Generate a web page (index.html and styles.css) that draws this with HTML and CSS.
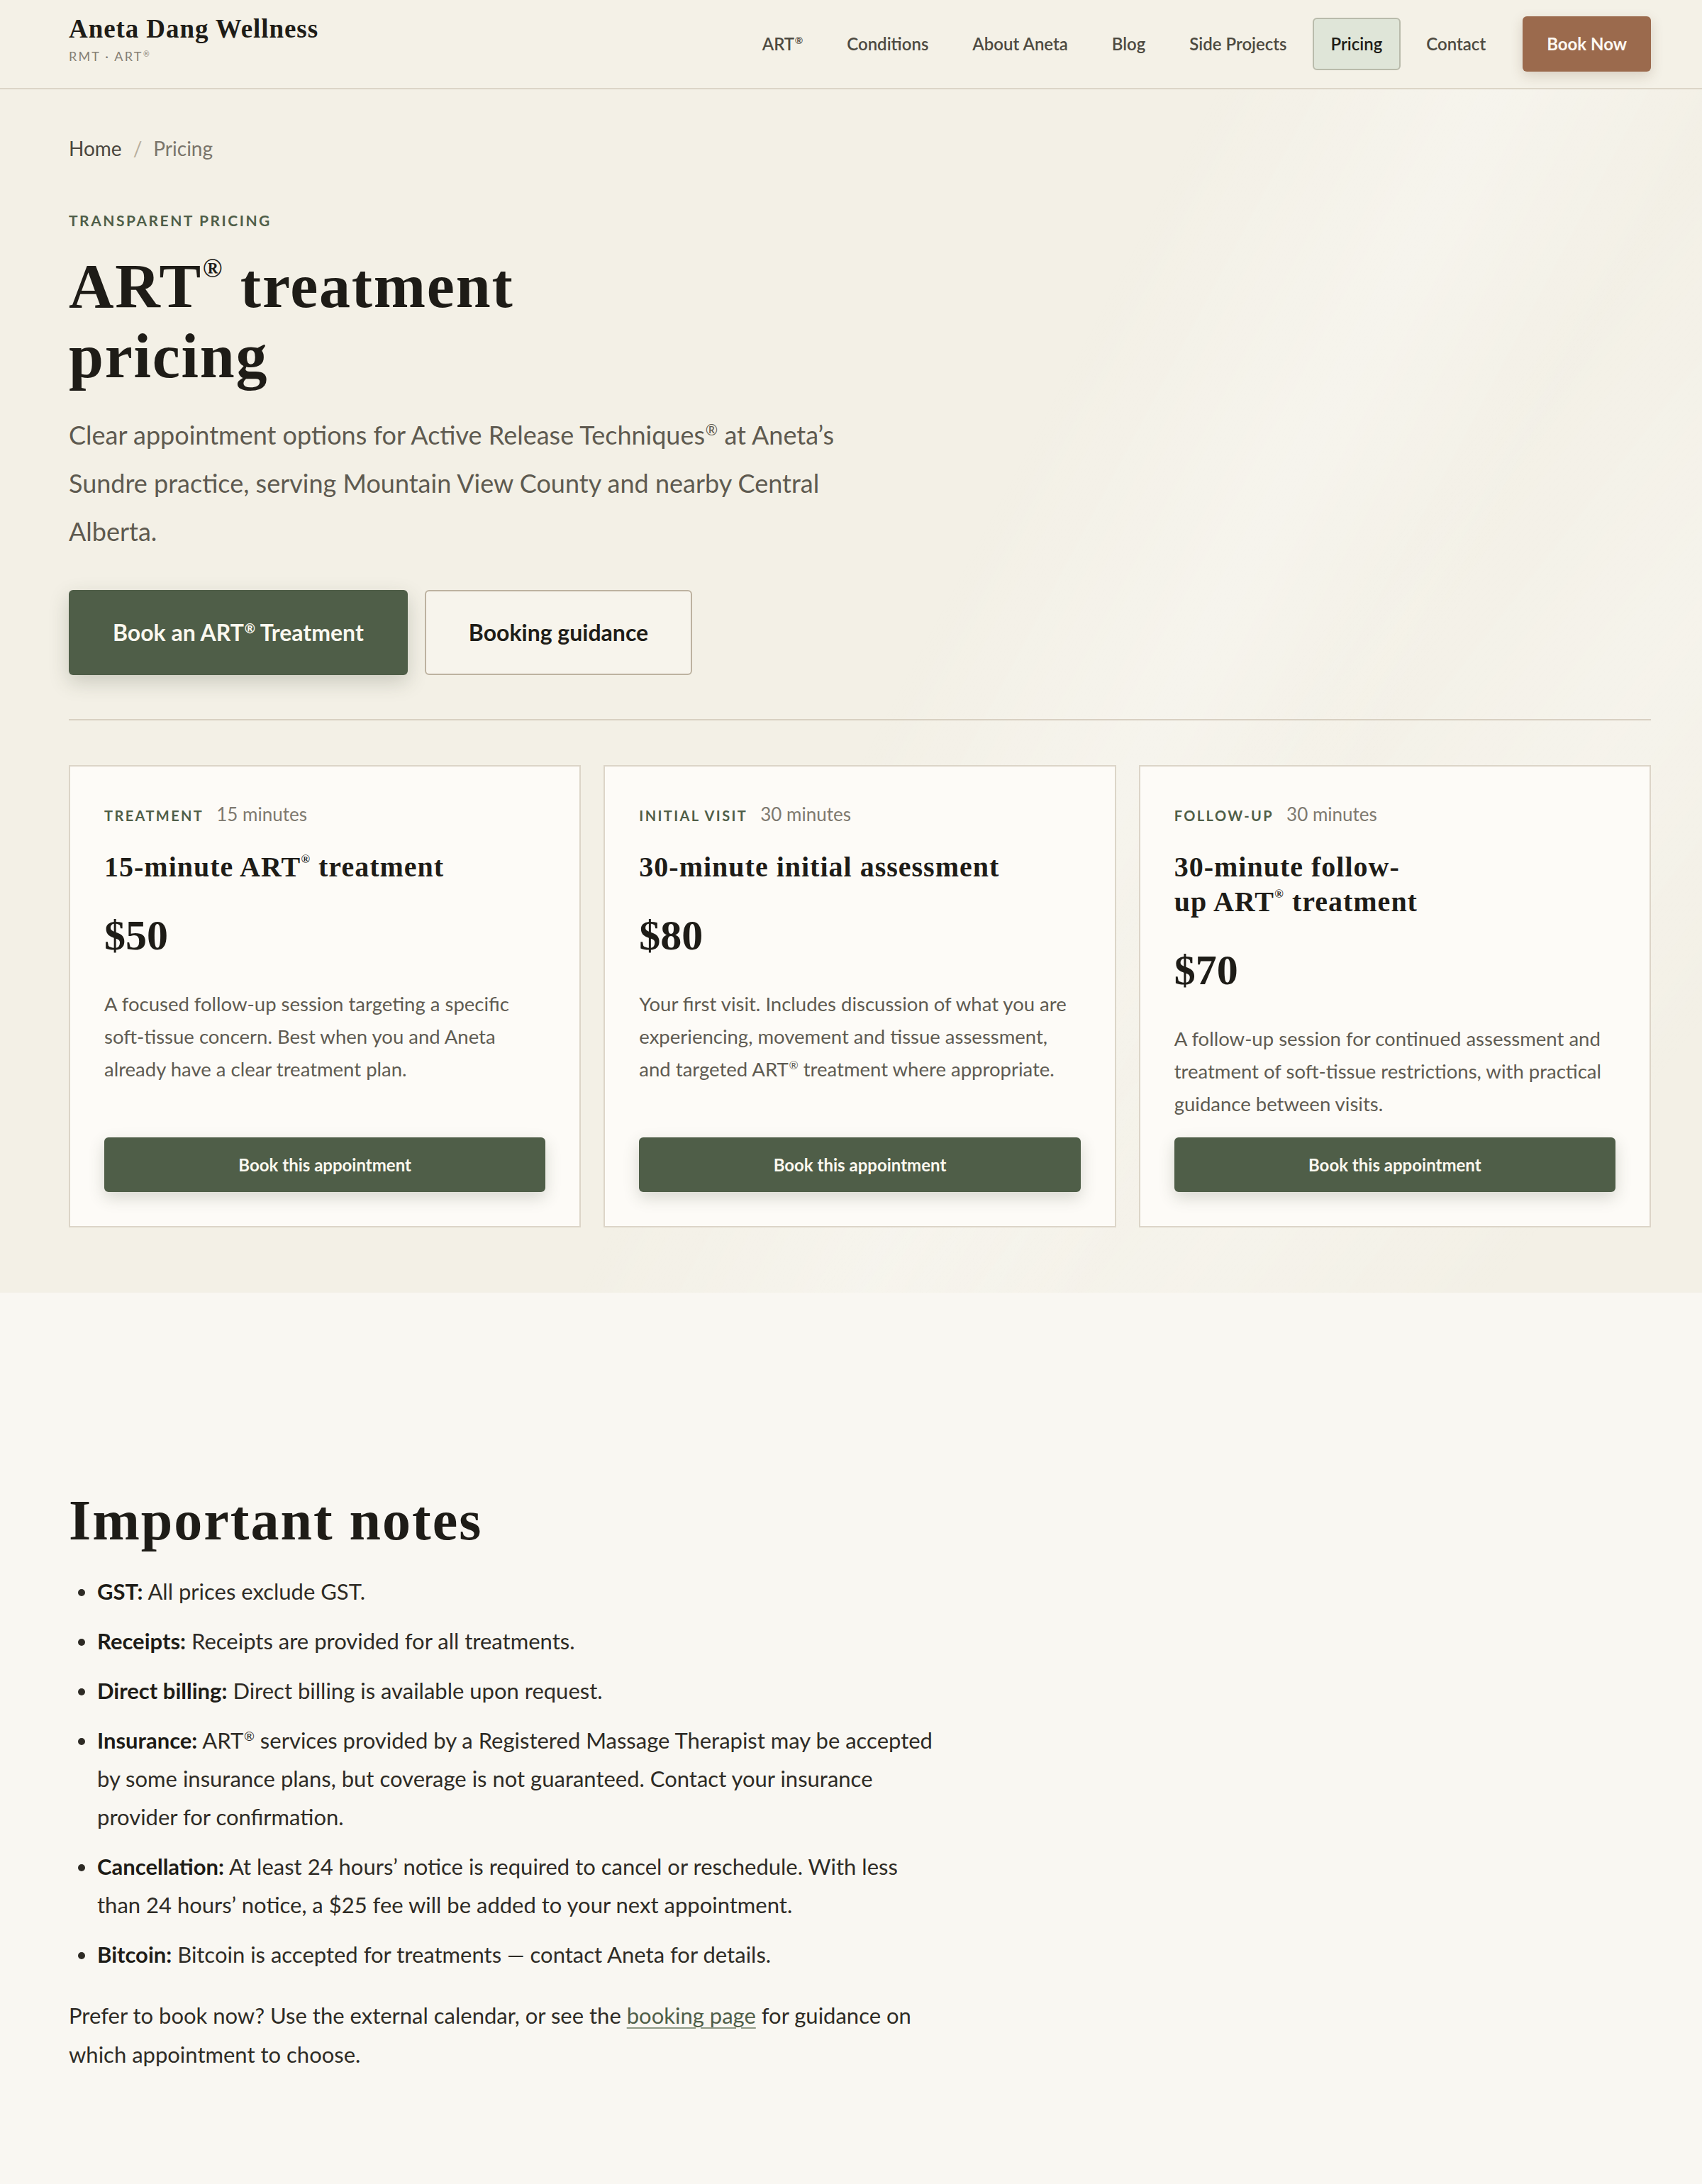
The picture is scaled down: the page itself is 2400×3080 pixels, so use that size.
FILE: index.html
```html
<!DOCTYPE html>
<html lang="en">
<head>
<meta charset="utf-8">
<title>ART® Treatment Pricing | Aneta Dang Wellness</title>
<link rel="stylesheet" href="styles.css">
</head>
<body>
<header class="site-header">
  <div class="container header-inner">
    <a class="brand" href="#">
      <span class="brand-name">Aneta Dang Wellness</span>
      <span class="brand-sub">RMT · ART<sup class="reg">®</sup></span>
    </a>
    <nav class="nav">
      <a class="nav-link" href="#">ART<sup class="reg">®</sup></a>
      <a class="nav-link" href="#">Conditions</a>
      <a class="nav-link" href="#">About Aneta</a>
      <a class="nav-link" href="#">Blog</a>
      <a class="nav-link" href="#">Side Projects</a>
      <a class="nav-link is-active" href="#">Pricing</a>
      <a class="nav-link" href="#">Contact</a>
      <a class="btn-book" href="#">Book Now</a>
    </nav>
  </div>
</header>

<main>
  <section class="hero">
    <div class="container">
      <nav class="breadcrumb">
        <a class="crumb" href="#">Home</a>
        <span class="crumb-sep">/</span>
        <span class="crumb-current">Pricing</span>
      </nav>
      <p class="eyebrow">Transparent pricing</p>
      <h1 class="hero-title">ART<sup class="reg">®</sup> treatment pricing</h1>
      <p class="lead">Clear appointment options for Active Release Techniques<sup class="reg">®</sup> at Aneta’s Sundre practice, serving Mountain View County and nearby Central Alberta.</p>
      <div class="hero-actions">
        <a class="btn btn-primary" href="#">Book an ART<sup class="reg">®</sup> Treatment</a>
        <a class="btn btn-outline" href="#">Booking guidance</a>
      </div>

      <div class="pricing-grid">
        <article class="card">
          <div class="card-meta"><span class="card-label">Treatment</span><span class="card-duration">15 minutes</span></div>
          <h2 class="card-title">15-minute ART<sup class="reg">®</sup> treatment</h2>
          <p class="card-price">$50</p>
          <p class="card-desc">A focused follow-up session targeting a specific soft-tissue concern. Best when you and Aneta already have a clear treatment plan.</p>
          <a class="card-btn" href="#">Book this appointment</a>
        </article>
        <article class="card">
          <div class="card-meta"><span class="card-label">Initial visit</span><span class="card-duration">30 minutes</span></div>
          <h2 class="card-title">30-minute initial assessment</h2>
          <p class="card-price">$80</p>
          <p class="card-desc">Your first visit. Includes discussion of what you are experiencing, movement and tissue assessment, and targeted ART<sup class="reg">®</sup> treatment where appropriate.</p>
          <a class="card-btn" href="#">Book this appointment</a>
        </article>
        <article class="card">
          <div class="card-meta"><span class="card-label">Follow-up</span><span class="card-duration">30 minutes</span></div>
          <h2 class="card-title">30-minute follow-up ART<sup class="reg">®</sup> treatment</h2>
          <p class="card-price">$70</p>
          <p class="card-desc">A follow-up session for continued assessment and treatment of soft-tissue restrictions, with practical guidance between visits.</p>
          <a class="card-btn" href="#">Book this appointment</a>
        </article>
      </div>
    </div>
  </section>

  <section class="notes">
    <div class="container">
      <div class="notes-body">
        <h2 class="notes-title">Important notes</h2>
        <ul class="notes-list">
          <li><strong>GST:</strong> All prices exclude GST.</li>
          <li><strong>Receipts:</strong> Receipts are provided for all treatments.</li>
          <li><strong>Direct billing:</strong> Direct billing is available upon request.</li>
          <li><strong>Insurance:</strong> ART<sup class="reg">®</sup> services provided by a Registered Massage Therapist may be accepted by some insurance plans, but coverage is not guaranteed. Contact your insurance provider for confirmation.</li>
          <li><strong>Cancellation:</strong> At least 24 hours’ notice is required to cancel or reschedule. With less than 24 hours’ notice, a $25 fee will be added to your next appointment.</li>
          <li><strong>Bitcoin:</strong> Bitcoin is accepted for treatments — contact Aneta for details.</li>
        </ul>
        <p class="notes-foot">Prefer to book now? Use the external calendar, or see the <a class="text-link" href="#">booking page</a> for guidance on which appointment to choose.</p>
      </div>
    </div>
  </section>
</main>
</body>
</html>
```

FILE: styles.css
```css
* { box-sizing: border-box; }

html, body { margin: 0; padding: 0; }

body {
  font-family: Lato, "Noto Sans", sans-serif;
  background: #f9f7f2;
  color: #2b2822;
}

a { color: inherit; text-decoration: none; }

.reg {
  font-size: 0.58em;
  line-height: 0;
  vertical-align: 0.62em;
  margin-left: 0.04em;
}

.hero-title .reg,
.card-title .reg {
  font-size: 0.42em;
  vertical-align: 1.15em;
  margin-left: 0.02em;
}

.container {
  padding: 0 72px 0 97px;
}

/* Header */
.site-header {
  background: #f4f1e7;
  border-bottom: 2px solid #dcd5c7;
}

.header-inner {
  display: flex;
  align-items: center;
  justify-content: space-between;
  height: 124px;
}

.brand {
  display: flex;
  flex-direction: column;
  padding-bottom: 12px;
}

.brand-name {
  font-family: "Liberation Serif", "DejaVu Serif", serif;
  font-weight: 700;
  font-size: 37px;
  letter-spacing: 0.025em;
  line-height: 42px;
  color: #1e1c17;
}

.brand-sub {
  font-size: 18px;
  letter-spacing: 0.12em;
  color: #857f74;
  line-height: 26px;
  margin-top: 4px;
}

.nav {
  display: flex;
  align-items: center;
  gap: 10px;
}

.nav-link {
  font-size: 24px;
  font-weight: 600;
  color: #4d4a41;
  line-height: 30px;
  padding: 20px 24px;
  border: 2px solid transparent;
  border-radius: 6px;
}

.nav-link.is-active {
  background: #dfe5d8;
  border-color: #b9bbab;
  color: #1e1c17;
}

.btn-book {
  margin-left: 16px;
  background: #9b6a4d;
  color: #fdf8f2;
  font-size: 24px;
  font-weight: 700;
  line-height: 30px;
  padding: 24px 34px;
  border-radius: 6px;
  box-shadow: 0 6px 18px rgba(90, 55, 30, 0.18);
}

/* Hero */
.hero {
  background:
    linear-gradient(118deg, rgba(255,255,255,0) 52%, rgba(255,255,255,0.28) 64%, rgba(255,255,255,0) 74%),
    linear-gradient(128deg, rgba(255,255,255,0) 66%, rgba(255,255,255,0.22) 80%, rgba(255,255,255,0) 92%),
    #f3f0e6;
  padding: 62px 0 92px;
}

.breadcrumb {
  display: flex;
  align-items: center;
  gap: 16px;
  font-size: 28px;
  line-height: 42px;
  margin-bottom: 66px;
}

.crumb { color: #4a463d; }
.crumb-sep { color: #b8ae9c; }
.crumb-current { color: #7a756b; }

.eyebrow {
  margin: 0 0 29px;
  font-size: 21px;
  font-weight: 700;
  letter-spacing: 0.12em;
  text-transform: uppercase;
  line-height: 30px;
  color: #4f5e48;
}

.hero-title {
  margin: 0 0 27px;
  max-width: 800px;
  font-family: "Liberation Serif", "DejaVu Serif", serif;
  font-weight: 700;
  font-size: 88px;
  line-height: 1.12;
  letter-spacing: 0.02em;
  color: #1e1c17;
}

.lead {
  margin: 0 0 49px;
  max-width: 1150px;
  font-size: 36px;
  line-height: 68px;
  color: #5e5a50;
}

.hero-actions {
  display: flex;
  gap: 24px;
}

.btn {
  display: inline-block;
  font-size: 32px;
  font-weight: 700;
  line-height: 38px;
  border-radius: 6px;
}

.btn-primary {
  padding: 41px 62px;
  background: #4f5e48;
  color: #fbf8ef;
  box-shadow: 0 10px 28px rgba(60, 70, 50, 0.22);
}

.btn-outline {
  padding: 39px 60px;
  border: 2px solid #bdb2a0;
  background: #f7f4ec;
  color: #1f1d18;
}

/* Cards */
.pricing-grid {
  margin-top: 62px;
  padding-top: 63px;
  border-top: 2px solid #d8d0c2;
  display: grid;
  grid-template-columns: repeat(3, 1fr);
  gap: 32px;
}

.card {
  display: flex;
  flex-direction: column;
  background: #fdfbf7;
  border: 2px solid #dcd5c8;
  padding: 48px;
}

.card-meta {
  display: flex;
  align-items: baseline;
  gap: 18px;
  line-height: 39px;
}

.card-label {
  font-size: 20px;
  font-weight: 700;
  letter-spacing: 0.12em;
  text-transform: uppercase;
  color: #4f5e48;
}

.card-duration {
  font-size: 26px;
  color: #7e796f;
}

.card-title {
  margin: 28px 0 38px;
  font-family: "Liberation Serif", "DejaVu Serif", serif;
  font-weight: 700;
  font-size: 40px;
  line-height: 49px;
  letter-spacing: 0.025em;
  color: #1e1c17;
  text-wrap: balance;
}

.card-price {
  margin: 0 0 40px;
  font-family: "Liberation Serif", "DejaVu Serif", serif;
  font-weight: 700;
  font-size: 60px;
  line-height: 68px;
  color: #1e1c17;
}

.card-desc {
  margin: 0 0 24px;
  font-size: 27.5px;
  line-height: 46px;
  color: #5f5b52;
}

.card-btn {
  margin-top: auto;
  display: block;
  text-align: center;
  background: #4f5e48;
  color: #fbf8ef;
  font-size: 24px;
  font-weight: 700;
  line-height: 29px;
  padding: 24px;
  border-radius: 6px;
  box-shadow: 0 8px 22px rgba(60, 70, 50, 0.2);
}

/* Notes */
.notes {
  background: #f9f7f2;
  padding: 276px 0 150px;
}

.notes-body {
  max-width: 1228px;
}

.notes-title {
  margin: 0 0 28px;
  font-family: "Liberation Serif", "DejaVu Serif", serif;
  font-weight: 700;
  font-size: 80px;
  line-height: 90px;
  letter-spacing: 0.025em;
  color: #1e1c17;
}

.notes-list {
  margin: 0 0 32px;
  padding-left: 40px;
}

.notes-list li {
  font-size: 31px;
  line-height: 54px;
  margin-bottom: 16px;
  color: #2e2b25;
}

.notes-list li:last-child { margin-bottom: 0; }

.notes-list strong {
  font-weight: 700;
  color: #1e1c17;
}

.notes-foot {
  margin: 0;
  font-size: 31px;
  line-height: 55px;
  color: #2e2b25;
}

.text-link {
  color: #4f5e48;
  text-decoration: underline;
  text-decoration-color: #8f9a86;
  text-decoration-thickness: 2px;
  text-underline-offset: 5px;
}
```
